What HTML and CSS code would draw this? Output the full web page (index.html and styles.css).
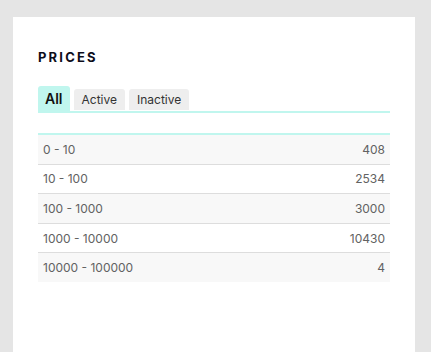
FILE: index.html
```html
<!DOCTYPE html>
<html lang="en">
<head>
    <meta charset="UTF-8">
    <title>Prices</title>
    <link rel="stylesheet" href="styles.css">
</head>
<body>
    <div class="card">
        <h2 class="title">PRICES</h2>
        <div class="tabs">
            <button class="tab active">All</button>
            <button class="tab">Active</button>
            <button class="tab">Inactive</button>
        </div>
        <table class="prices">
            <tr><td>0 - 10</td><td class="num">408</td></tr>
            <tr><td>10 - 100</td><td class="num">2534</td></tr>
            <tr><td>100 - 1000</td><td class="num">3000</td></tr>
            <tr><td>1000 - 10000</td><td class="num">10430</td></tr>
            <tr><td>10000 - 100000</td><td class="num">4</td></tr>
        </table>
    </div>
</body>
</html>
```

FILE: styles.css
```css
body {
    margin: 0;
    background-color: #e5e5e5;
    font-family: Inter, "Noto Sans", sans-serif;
    height: 352px;
    overflow: hidden;
}
.card {
    background-color: #fff;
    margin: 17px 0 0 13px;
    width: 402px;
    height: 335px;
    padding: 32px 25px 0 25px;
    box-sizing: border-box;
}
.title {
    margin: 0;
    font-size: 13px;
    font-weight: 700;
    letter-spacing: 2.2px;
    color: #0d0d1a;
    line-height: 16px;
}
.tabs {
    display: flex;
    align-items: flex-end;
    gap: 3px;
    margin-top: 21px;
    border-bottom: 2px solid #c0f6ee;
}
.tab {
    font-family: inherit;
    font-size: 12px;
    color: #333;
    background-color: #eeeeee;
    border: none;
    border-radius: 3px 3px 0 0;
    padding: 0 8px;
    height: 21px;
    margin-bottom: 1px;
    cursor: pointer;
}
.tab + .tab {
    margin-left: 1px;
}
.tab.active {
    background-color: #c0f6ee;
    color: #111;
    font-size: 14px;
    font-weight: 600;
    height: 25px;
    margin-bottom: 0;
    padding: 0 7px;
}
.prices {
    width: 100%;
    margin-top: 20px;
    border-collapse: collapse;
    border-top: 2px solid #c0f6ee;
    font-size: 12px;
    color: #626262;
}
.prices td {
    height: 28.6px;
    padding: 0 5px;
    border-bottom: 1px solid #dddddd;
}
.prices tr:nth-child(odd) {
    background-color: #f8f8f8;
}
.prices tr:last-child td {
    border-bottom: none;
}
.prices .num {
    text-align: right;
}
```
